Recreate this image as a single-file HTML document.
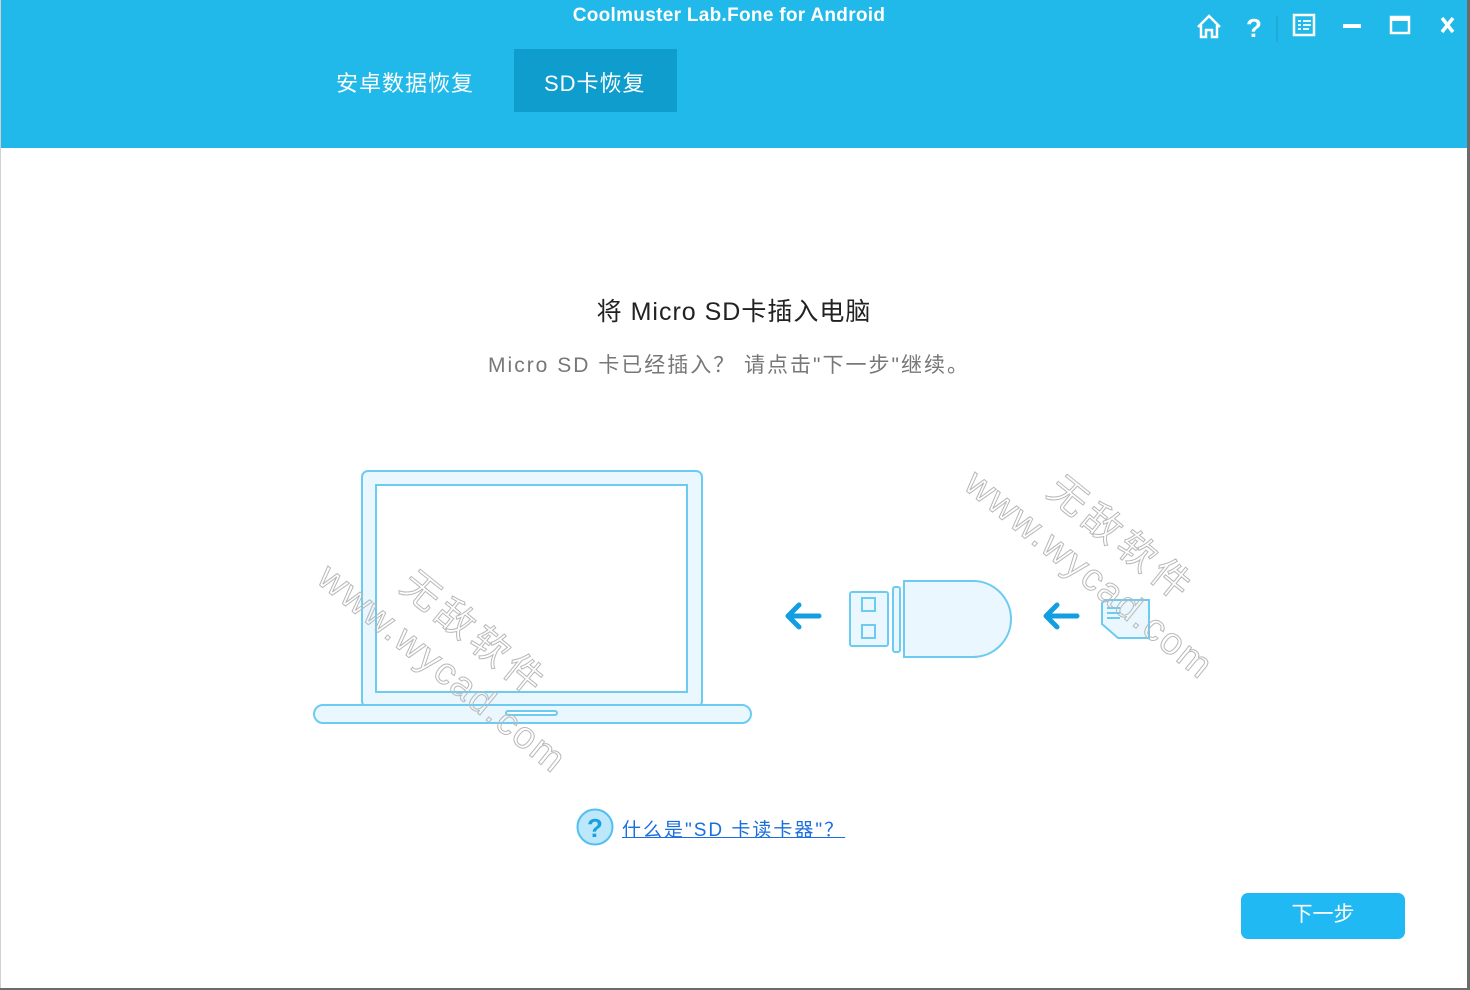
<!DOCTYPE html>
<html><head><meta charset="utf-8"><style>
body{margin:0;width:1470px;height:990px;background:#6b6b6b;position:relative;overflow:hidden;font-family:"Liberation Sans","Noto Sans CJK SC",sans-serif}
#win{position:absolute;left:0;top:0;width:1466px;height:988px;background:#fff;border-left:1px solid #d0d0d0}
#hdr{position:absolute;left:0;top:0;width:1466px;height:148px;background:#21b9e9}
.t{position:absolute;white-space:nowrap}
.wm{position:absolute;white-space:nowrap;font-size:38px;color:transparent;-webkit-text-stroke:1px #b8b8b8;font-family:"Liberation Sans","Noto Sans CJK SC",sans-serif;transform-origin:0 0;letter-spacing:2px}
</style></head><body>
<div id="win">
<div id="hdr">
 <div class="t" style="left:0;width:1456px;text-align:center;top:5px;color:#fff;font-weight:bold;font-size:19px;letter-spacing:0.3px">Coolmuster Lab.Fone for Android</div>
 <div class="t" style="left:335px;top:66px;color:#fff;font-size:22px;letter-spacing:1px">安卓数据恢复</div>
 <div style="position:absolute;left:513px;top:49px;width:163px;height:63px;background:#0f9dcd"></div>
 <div class="t" style="left:543px;top:66px;color:#fff;font-size:22px;letter-spacing:1px">SD卡恢复</div>
 <svg style="position:absolute;left:1190px;top:10px" width="276" height="34" viewBox="0 0 276 34" fill="none" stroke="#fff" stroke-width="2.5">
  <path d="M7 17 L18 6 L29 17 M10 15 V27 H15 V20 H21 V27 H26 V15"/>
  <text x="55" y="27" fill="#fff" stroke="none" font-size="26" font-weight="bold" font-family="Liberation Sans">?</text>
  <line x1="86" y1="6" x2="86" y2="32" stroke="#1a9fcc" stroke-width="1"/>
  <rect x="103" y="5" width="20" height="20" stroke-width="2.5"/>
  <path d="M107 11h3M112 11h8M107 15h3M112 15h8M107 19h3M112 19h6" stroke-width="1.8"/>
  <path d="M152 16h18" stroke-width="4"/>
  <rect x="200" y="7" width="18" height="16" stroke-width="2.5"/><path d="M200 9h18" stroke-width="4"/>
  <path d="M251 8l11 14M262 8l-11 14" stroke-width="3.5"/>
 </svg>
</div>
<div class="t" style="left:0;width:1466px;text-align:center;top:292px;font-size:25px;color:#222;letter-spacing:1px">将 Micro SD卡插入电脑</div>
<div class="t" style="left:0;width:1456px;text-align:center;top:349px;font-size:21px;color:#777;letter-spacing:2px">Micro SD 卡已经插入？ 请点击"下一步"继续。</div>
<svg style="position:absolute;left:0;top:450px" width="1466" height="300" viewBox="0 450 1466 300">
 <g stroke="#6ccbf0" stroke-width="2" fill="#eaf7fe">
  <rect x="361" y="471" width="340" height="236" rx="6"/>
  <rect x="375" y="485" width="311" height="207" fill="#fff"/>
  <rect x="313" y="705" width="437" height="18" rx="9"/>
  <rect x="505" y="711" width="51" height="4" rx="2" fill="#fff"/>
  <rect x="849" y="592" width="38" height="54" rx="2"/>
  <rect x="861" y="598" width="13" height="13"/><rect x="861" y="625" width="13" height="13"/>
  <rect x="892" y="587" width="7" height="65" rx="2"/>
  <path d="M903 581 H972 A38 38 0 0 1 972 657 H903 Z"/>
  <path d="M1104 600 H1148 V638 H1117 L1101 624 V603 Z"/>
 </g>
 <path d="M1106 608h13M1106 613h13M1106 618h13" stroke="#6ccbf0" stroke-width="2"/>
 <g stroke="#129ee0" stroke-width="5" fill="none" stroke-linecap="round" stroke-linejoin="round">
  <path d="M818 616H788M798 605L787 616L798 627"/>
  <path d="M1076 616H1046M1056 605L1045 616L1056 627"/>
 </g>
</svg>
<div class="wm" style="left:335px;top:556px;transform:rotate(39deg)">www.wycad.com</div>
<div class="wm" style="left:425px;top:555px;transform:rotate(39deg);letter-spacing:6px">无敌软件</div>
<div class="wm" style="left:982px;top:462px;transform:rotate(39deg)">www.wycad.com</div>
<div class="wm" style="left:1072px;top:460px;transform:rotate(39deg);letter-spacing:6px">无敌软件</div>
<svg style="position:absolute;left:575px;top:808px" width="40" height="40"><circle cx="19" cy="19" r="17.5" fill="#bde8fb" stroke="#4fc0ef" stroke-width="2"/><text x="19" y="29" text-anchor="middle" font-size="26" font-weight="bold" fill="#1aa0e0" font-family="Liberation Sans">?</text></svg>
<div class="t" style="left:621px;top:815px;font-size:19px;color:#1b6ee0;text-decoration:underline;letter-spacing:2px">什么是"SD 卡读卡器"？</div>
<div style="position:absolute;left:1240px;top:893px;width:164px;height:46px;background:#21b9f3;border-radius:7px;color:#fff;font-size:21px;text-align:center;line-height:44px">下一步</div>
</div>
</body></html>
